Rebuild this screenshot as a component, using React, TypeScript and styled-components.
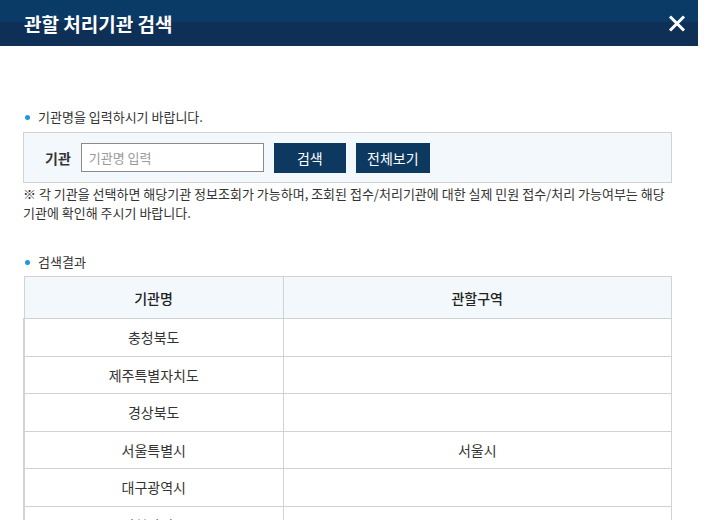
import React from "react";
import styled, { createGlobalStyle } from "styled-components";

const Global = createGlobalStyle`
  html, body { margin: 0; padding: 0; background: #fff; }
  body { font-family: "Noto Sans CJK KR", "Noto Sans", sans-serif; color: #333; overflow: hidden; }
  * { box-sizing: border-box; }
`;

const Modal = styled.div`
  width: 698px;
  background: #fff;
`;

const Header = styled.header`
  height: 46px;
  display: flex;
  align-items: center;
  justify-content: space-between;
  padding: 0 11px 0 24px;
  background: linear-gradient(to bottom, #0a3a66 0, #0a3a66 22px, #0e3056 22px, #0e3056 100%);
`;

const Title = styled.h1`
  margin: 0;
  font-size: 19px;
  font-weight: 700;
  color: #fff;
  line-height: 1;
`;

const CloseButton = styled.button`
  width: 20px;
  height: 20px;
  border: 0;
  padding: 0;
  background: none;
  display: flex;
  align-items: center;
  justify-content: center;
  cursor: pointer;
`;

const Body = styled.div`
  padding: 62px 26px 0 23px;
`;

const BulletTitle = styled.p<{ $top?: number }>`
  margin: ${(p) => p.$top ?? 0}px 0 0;
  padding-left: 15px;
  position: relative;
  font-size: 13px;
  line-height: 18px;
  color: #333;
  &::before {
    content: "";
    position: absolute;
    left: 2px;
    top: 7px;
    width: 5px;
    height: 5px;
    border-radius: 50%;
    background: #1e98e0;
  }
`;

const SearchBox = styled.div`
  margin-top: 6px;
  height: 51px;
  display: flex;
  align-items: center;
  padding-left: 21px;
  background: #f3f8fc;
  border: 1px solid #d2d2d2;
`;

const Label = styled.label`
  font-size: 14px;
  font-weight: 700;
  color: #333;
  margin-right: 10px;
`;

const Input = styled.input`
  width: 183px;
  height: 29px;
  border: 1px solid #8a8a8a;
  background: #fff;
  padding: 0 7px;
  font-family: inherit;
  font-size: 13px;
  color: #333;
  margin-right: 10px;
  outline: none;
  &::placeholder { color: #999; }
`;

const Button = styled.button<{ $w: number }>`
  width: ${(p) => p.$w}px;
  height: 30px;
  margin-right: 10px;
  border: 0;
  background: #0d3961;
  color: #fff;
  font-family: inherit;
  font-size: 14px;
  cursor: pointer;
`;

const Note = styled.p`
  margin: 1px 0 0;
  font-size: 13px;
  line-height: 19px;
  color: #333;
`;

const Table = styled.table`
  margin-top: 5px;
  width: 100%;
  border-collapse: collapse;
  table-layout: fixed;
  border: 1px solid #d2d2d2;
`;

const Th = styled.th`
  height: 42px;
  background: #f3f8fc;
  border: 1px solid #d2d2d2;
  font-size: 14px;
  font-weight: 500;
  color: #222;
  text-align: center;
`;

const Td = styled.td`
  height: 37.5px;
  border: 1px solid #d2d2d2;
  font-size: 14px;
  color: #333;
  text-align: center;
  &:first-child { border-left: 2px solid #d2d2d2; }
`;

const rows: [string, string][] = [
  ["충청북도", ""],
  ["제주특별자치도", ""],
  ["경상북도", ""],
  ["서울특별시", "서울시"],
  ["대구광역시", ""],
  ["인천광역시", ""],
  ["광주광역시", ""],
];

export default function App() {
  return (
    <>
      <Global />
      <Modal>
        <Header>
          <Title>관할 처리기관 검색</Title>
          <CloseButton aria-label="닫기">
            <svg width="18" height="17" viewBox="0 0 18 17">
              <path d="M2 1.5 L16 15.5 M16 1.5 L2 15.5" stroke="#fff" strokeWidth="3" fill="none" />
            </svg>
          </CloseButton>
        </Header>
        <Body>
          <BulletTitle>기관명을 입력하시기 바랍니다.</BulletTitle>
          <SearchBox>
            <Label htmlFor="org">기관</Label>
            <Input id="org" placeholder="기관명 입력" />
            <Button $w={72}>검색</Button>
            <Button $w={74}>전체보기</Button>
          </SearchBox>
          <Note>
            ※ 각 기관을 선택하면 해당기관 정보조회가 가능하며, 조회된 접수/처리기관에 대한 실제 민원 접수/처리 가능여부는 해당
            <br />
            기관에 확인해 주시기 바랍니다.
          </Note>
          <BulletTitle $top={31}>검색결과</BulletTitle>
          <Table>
            <colgroup>
              <col style={{ width: 259 }} />
              <col />
            </colgroup>
            <thead>
              <tr>
                <Th>기관명</Th>
                <Th>관할구역</Th>
              </tr>
            </thead>
            <tbody>
              {rows.map(([a, b]) => (
                <tr key={a}>
                  <Td>{a}</Td>
                  <Td>{b}</Td>
                </tr>
              ))}
            </tbody>
          </Table>
        </Body>
      </Modal>
    </>
  );
}
